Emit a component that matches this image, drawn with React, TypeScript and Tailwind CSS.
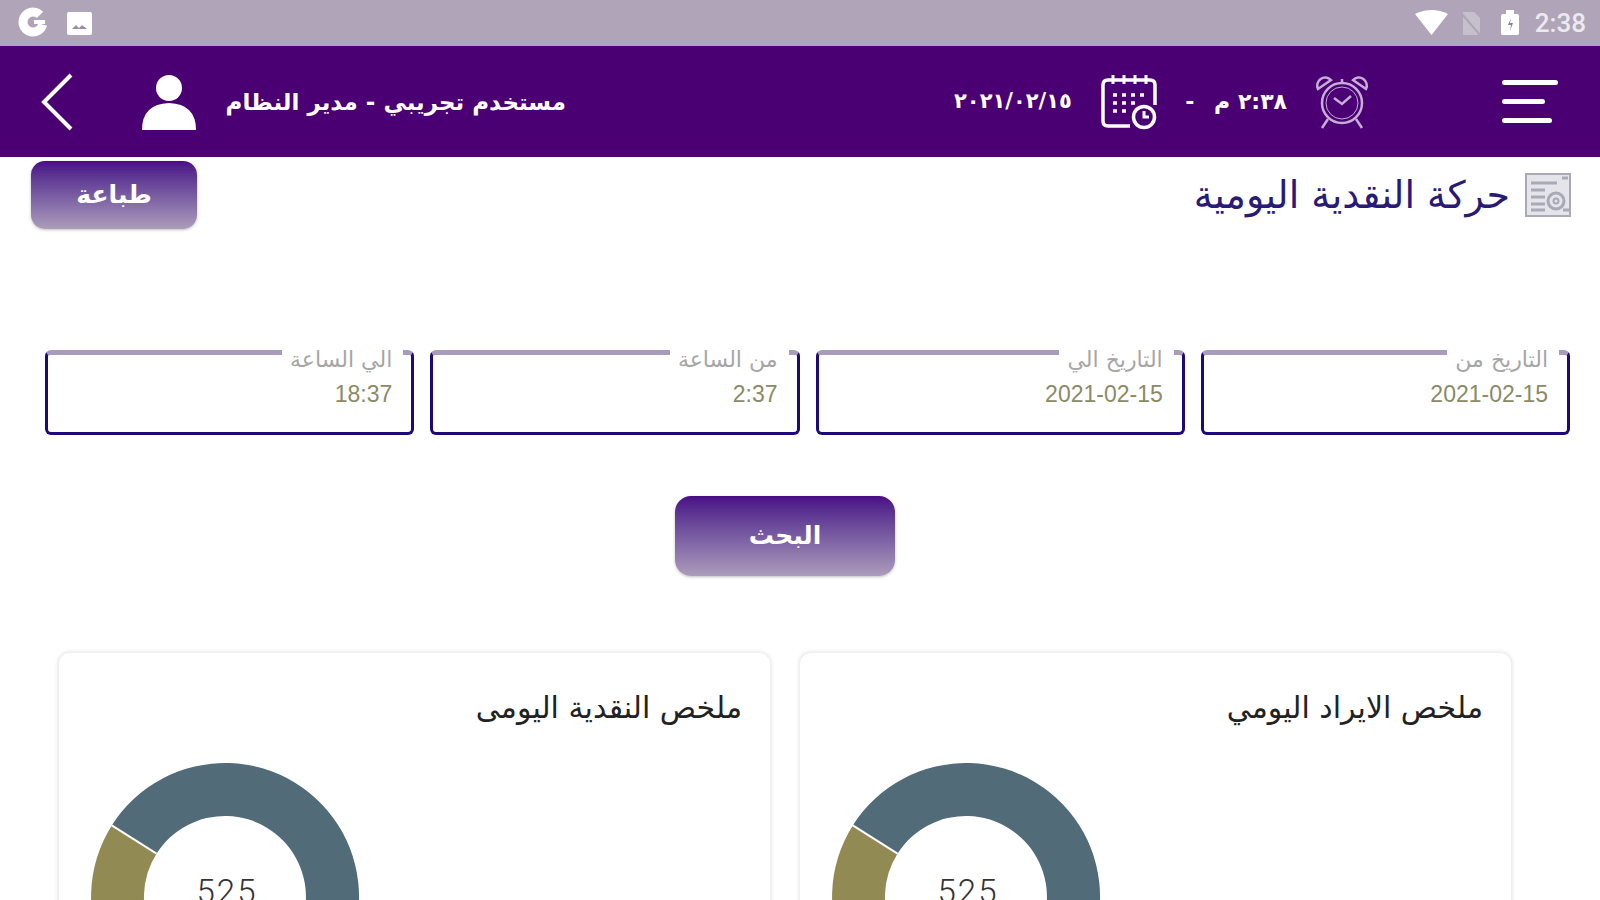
const fields = [
  { label: "التاريخ من", value: "2021-02-15" },
  { label: "التاريخ الي", value: "2021-02-15" },
  { label: "من الساعة", value: "2:37" },
  { label: "الي الساعة", value: "18:37" },
];

const arabic = "font-['DejaVu_Sans',sans-serif]";

function StatusIcons() {
  return (
    <svg width="1600" height="46" viewBox="0 0 1600 46" className="absolute left-0 top-0">
      <circle cx="33" cy="22" r="10" fill="none" stroke="#fff" strokeWidth="9" strokeDasharray="52 11" transform="rotate(15 33 22)" />
      <rect x="34" y="20" width="11" height="4" fill="#fff" />
      <rect x="67" y="12" width="25" height="23" rx="2" fill="#fff" />
      <path d="M72 29l4-4 3 3 3-3 5 4z" fill="#9a8fa4" />
      <path d="M1415 14q17-8 33 0l-16.500 21z" fill="#fff" />
      <path d="M1463 12h11l6 6v17h-17z" fill="#c6bfcc" />
      <path d="M1462 14l18 21" stroke="#b0a5b8" strokeWidth="2" />
      <rect x="1501" y="14" width="18" height="21" rx="2" fill="#fff" />
      <rect x="1506" y="10" width="8" height="5" fill="#fff" />
      <path d="M1511 18l-3 7h3l-1 6 3-8h-3z" fill="#8d8098" />
    </svg>
  );
}

function Calendar() {
  return (
    <svg width="58" height="58" viewBox="0 0 58 58" fill="none" stroke="#fff" strokeWidth="3.500" className="shrink-0">
      <path d="M30 53H8q-5 0-5-5V12q0-5 5-5h42q5 0 5 5v20" />
      <path d="M13 2v9M24 2v9M35 2v9M46 2v9" strokeWidth="3" />
      <path d="M13 22h4M22 22h4M31 22h4M40 22h4M13 30h4M22 30h4M31 30h4M13 38h4M22 38h4" strokeWidth="3.500" />
      <circle cx="44" cy="44" r="10.500" />
      <path d="M44 38v6h5" strokeWidth="3" />
    </svg>
  );
}

function Alarm() {
  return (
    <svg width="56" height="56" viewBox="0 0 56 56" fill="none" stroke="#c4aed6" strokeWidth="2.500" className="shrink-0">
      <circle cx="28" cy="29" r="20" />
      <circle cx="28" cy="29" r="16" strokeWidth="1" />
      <path d="M20 24l8 6 9-8" />
      <path d="M4 15a8 8 0 0 1 13-9zM52 15a8 8 0 0 0-13-9z" />
      <path d="M14 45l-6 9M42 45l6 9" />
      <path d="M28 5v4" />
    </svg>
  );
}

function TitleIcon() {
  return (
    <svg width="46" height="46" viewBox="0 0 46 46" fill="none" stroke="#a9a9b8" strokeWidth="2" className="shrink-0">
      <rect x="1" y="2" width="44" height="42" fill="#e4e4ea" />
      <path d="M6 11h26M6 18h14M6 25h14M6 32h14M6 38h14" strokeWidth="3" />
      <circle cx="31" cy="29" r="8" strokeWidth="3" />
      <circle cx="31" cy="29" r="2.500" />
      <path d="M37 6h6M38 38h6" strokeWidth="3" />
    </svg>
  );
}

function Donut() {
  return (
    <div className="relative ml-[31px] mt-[35px] h-[270px] w-[270px]">
      <svg width="270" height="270" viewBox="0 0 270 270">
        <path d="M21.800 63.400A134 134 0 1 1 135 269L135 216A81 81 0 1 0 66.500 91.700Z" fill="#526b79" />
        <path d="M135 269A134 134 0 0 1 21.800 63.400L66.500 91.700A81 81 0 0 0 135 216Z" fill="#918a52" />
        <path d="M21.800 63.400L66.500 91.700" stroke="#fff" strokeWidth="2" />
      </svg>
      <div className="absolute left-0 right-0 top-[110px] pl-[4px] text-center font-['Roboto',sans-serif] text-[33px] font-light leading-[40px] tracking-[2px] text-[#333]">
        525
      </div>
    </div>
  );
}

function SummaryCard({ title }: { title: string }) {
  return (
    <div className="h-[300px] w-[713px] rounded-[12px] border border-[#f0f0f0] bg-white shadow-[0_0_4px_rgba(0,0,0,0.12)]">
      <div dir="rtl" className={`${arabic} pr-[28px] pt-[36px] text-[30px] leading-[38px] text-[#222]`}>
        {title}
      </div>
      <Donut />
    </div>
  );
}

export default function App() {
  return (
    <div className="h-screen overflow-hidden bg-white">
      {/* status bar */}
      <div className="relative flex h-[46px] items-center justify-end bg-[#b0a5b8] pr-[14px]">
        <StatusIcons />
        <span className="relative font-['Roboto',sans-serif] text-[26px] font-medium text-[#ece9ef]">2:38</span>
      </div>

      {/* app header */}
      <div className={`${arabic} flex h-[111px] items-center bg-[#4a0073] text-white`}>
        <svg width="32" height="58" viewBox="0 0 32 58" fill="none" stroke="#fff" strokeWidth="4" className="ml-[41px] shrink-0">
          <path d="M30 2L3 29l27 27" />
        </svg>
        <svg width="54" height="58" viewBox="0 0 54 58" fill="#fff" className="ml-[69px] shrink-0">
          <circle cx="27" cy="15" r="13" />
          <path d="M0 57q0-26 27-27q27 1 27 27z" />
        </svg>
        <div dir="rtl" className="ml-[28px] mt-[2px] w-[342px] whitespace-nowrap text-[23px] font-bold">
          مستخدم تجريبي - مدير النظام
        </div>
        <div className="ml-[388px] w-[117px] whitespace-nowrap text-right text-[21px] font-bold">٢٠٢١/٠٢/١٥</div>
        <div className="ml-[29px]">
          <Calendar />
        </div>
        <div dir="rtl" className="ml-[27px] w-[102px] whitespace-nowrap text-[22px] font-bold">
          ٢:٣٨ م <span className="mr-[12px]">-</span>
        </div>
        <div className="ml-[27px]">
          <Alarm />
        </div>
        <div className="ml-[132px] flex w-[56px] flex-col gap-[14px]">
          <div className="h-[5px] w-[56px] rounded-full bg-white" />
          <div className="h-[5px] w-[43px] rounded-full bg-white" />
          <div className="h-[5px] w-[50px] rounded-full bg-white" />
        </div>
      </div>

      {/* page title row */}
      <div className="mt-[4px] flex h-[68px] items-center justify-between pl-[31px] pr-[29px]">
        <button className={`${arabic} h-[68px] w-[166px] rounded-[14px] bg-gradient-to-b from-[#4a0a85] to-[#ad9cba] text-[25px] font-bold text-white shadow-[0_1px_3px_rgba(0,0,0,0.25)]`}>
          طباعة
        </button>
        <div className="flex items-center gap-[15px]">
          <div dir="rtl" className={`${arabic} text-[38px] leading-[46px] text-[#2a1a78]`}>
            حركة النقدية اليومية
          </div>
          <TitleIcon />
        </div>
      </div>

      {/* filters */}
      <div dir="rtl" className="ml-[45px] mr-[30px] mt-[105px] grid grid-cols-4 gap-[16px]">
        {fields.map((f) => (
          <fieldset
            key={f.label}
            className="h-[101px] min-w-0 rounded-[6px] border-[3px] border-t-[5px] border-[#1d0a78] border-t-[#a99cbb] pr-[8px]"
          >
            <legend className={`${arabic} pl-[8px] pr-[11px] pt-[15px] text-[22px] leading-[22px] text-[#a6a6a6]`}>{f.label}</legend>
            <div className="mr-[11px] mt-[11px] font-['Liberation_Sans',sans-serif] text-[23px] leading-[24px] text-[#8b8a66]">
              <bdi>{f.value}</bdi>
            </div>
          </fieldset>
        ))}
      </div>

      <div className="mt-[61px] flex justify-center pr-[30px]">
        <button className={`${arabic} h-[80px] w-[220px] rounded-[16px] bg-gradient-to-b from-[#4a0a85] to-[#ad9cba] text-[25px] font-bold text-white shadow-[0_1px_3px_rgba(0,0,0,0.25)]`}>
          البحث
        </button>
      </div>

      {/* summary cards */}
      <div className="mt-[76px] flex gap-[28px] pl-[58px]">
        <SummaryCard title="ملخص النقدية اليومى" />
        <SummaryCard title="ملخص الايراد اليومي" />
      </div>
    </div>
  );
}
